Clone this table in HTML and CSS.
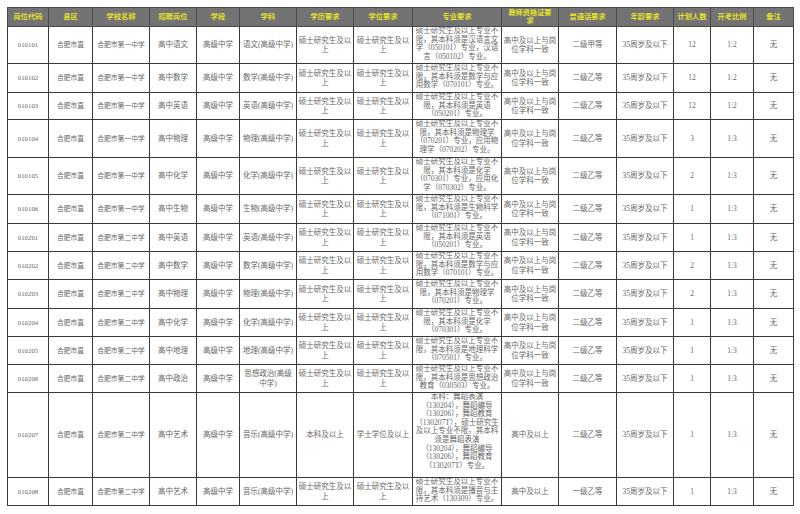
FILE: index.html
```html
<!DOCTYPE html>
<html lang="zh-CN">
<head>
<meta charset="utf-8">
<title>招聘岗位表</title>
<link rel="stylesheet" href="styles.css">
</head>
<body>
<table class="grid">
<colgroup>
<col class="c-code"><col class="c-county"><col class="c-school"><col class="c-post"><col class="c-stage"><col class="c-subject"><col class="c-edu"><col class="c-degree"><col class="c-major"><col class="c-cert"><col class="c-mandarin"><col class="c-age"><col class="c-plan"><col class="c-ratio"><col class="c-note">
</colgroup>
<thead>
<tr class="head">
<th>岗位代码</th><th>县区</th><th>学校名称</th><th>招聘岗位</th><th>学段</th><th>学科</th><th>学历要求</th><th>学位要求</th><th>专业要求</th><th>教师资格证要<br>求</th><th>普通话要求</th><th>年龄要求</th><th>计划人数</th><th>开考比例</th><th>备注</th>
</tr>
</thead>
<tbody>
<tr class="r37">
<td class="sm">010101</td><td class="sm">合肥市直</td><td class="sm">合肥市第一中学</td><td>高中语文</td><td>高级中学</td><td>语文(高级中学)</td><td>硕士研究生及以上</td><td>硕士研究生及以上</td><td class="major">硕士研究生及以上专业不限，其本科须是汉语言文学（050101）专业，汉语言（050102）专业。</td><td>高中及以上与岗位学科一致</td><td>二级甲等</td><td>35周岁及以下</td><td>12</td><td>1:2</td><td>无</td>
</tr>
<tr class="r29">
<td class="sm">010102</td><td class="sm">合肥市直</td><td class="sm">合肥市第一中学</td><td>高中数学</td><td>高级中学</td><td>数学(高级中学)</td><td>硕士研究生及以上</td><td>硕士研究生及以上</td><td class="major">硕士研究生及以上专业不限，其本科须是数学与应用数学（070101）专业。</td><td>高中及以上与岗位学科一致</td><td>二级乙等</td><td>35周岁及以下</td><td>12</td><td>1:2</td><td>无</td>
</tr>
<tr class="r27">
<td class="sm">010103</td><td class="sm">合肥市直</td><td class="sm">合肥市第一中学</td><td>高中英语</td><td>高级中学</td><td>英语(高级中学)</td><td>硕士研究生及以上</td><td>硕士研究生及以上</td><td class="major">硕士研究生及以上专业不限，其本科须是英语（050201）专业。</td><td>高中及以上与岗位学科一致</td><td>二级乙等</td><td>35周岁及以下</td><td>12</td><td>1:2</td><td>无</td>
</tr>
<tr class="r38">
<td class="sm">010104</td><td class="sm">合肥市直</td><td class="sm">合肥市第一中学</td><td>高中物理</td><td>高级中学</td><td>物理(高级中学)</td><td>硕士研究生及以上</td><td>硕士研究生及以上</td><td class="major">硕士研究生及以上专业不限，其本科须是物理学（070201）专业，应用物理学（070202）专业。</td><td>高中及以上与岗位学科一致</td><td>二级乙等</td><td>35周岁及以下</td><td>3</td><td>1:3</td><td>无</td>
</tr>
<tr class="r37">
<td class="sm">010105</td><td class="sm">合肥市直</td><td class="sm">合肥市第一中学</td><td>高中化学</td><td>高级中学</td><td>化学(高级中学)</td><td>硕士研究生及以上</td><td>硕士研究生及以上</td><td class="major">硕士研究生及以上专业不限，其本科须是化学（070301）专业，应用化学（070302）专业。</td><td>高中及以上与岗位学科一致</td><td>二级乙等</td><td>35周岁及以下</td><td>2</td><td>1:3</td><td>无</td>
</tr>
<tr class="r29">
<td class="sm">010106</td><td class="sm">合肥市直</td><td class="sm">合肥市第一中学</td><td>高中生物</td><td>高级中学</td><td>生物(高级中学)</td><td>硕士研究生及以上</td><td>硕士研究生及以上</td><td class="major">硕士研究生及以上专业不限，其本科须是生物科学（071001）专业。</td><td>高中及以上与岗位学科一致</td><td>二级乙等</td><td>35周岁及以下</td><td>1</td><td>1:3</td><td>无</td>
</tr>
<tr class="r28">
<td class="sm">010201</td><td class="sm">合肥市直</td><td class="sm">合肥市第二中学</td><td>高中英语</td><td>高级中学</td><td>英语(高级中学)</td><td>硕士研究生及以上</td><td>硕士研究生及以上</td><td class="major">硕士研究生及以上专业不限，其本科须是英语（050201）专业。</td><td>高中及以上与岗位学科一致</td><td>二级乙等</td><td>35周岁及以下</td><td>1</td><td>1:3</td><td>无</td>
</tr>
<tr class="r28">
<td class="sm">010202</td><td class="sm">合肥市直</td><td class="sm">合肥市第二中学</td><td>高中数学</td><td>高级中学</td><td>数学(高级中学)</td><td>硕士研究生及以上</td><td>硕士研究生及以上</td><td class="major">硕士研究生及以上专业不限，其本科须是数学与应用数学（070101）专业。</td><td>高中及以上与岗位学科一致</td><td>二级乙等</td><td>35周岁及以下</td><td>2</td><td>1:3</td><td>无</td>
</tr>
<tr class="r29">
<td class="sm">010203</td><td class="sm">合肥市直</td><td class="sm">合肥市第二中学</td><td>高中物理</td><td>高级中学</td><td>物理(高级中学)</td><td>硕士研究生及以上</td><td>硕士研究生及以上</td><td class="major">硕士研究生及以上专业不限，其本科须是物理学（070201）专业。</td><td>高中及以上与岗位学科一致</td><td>二级乙等</td><td>35周岁及以下</td><td>2</td><td>1:3</td><td>无</td>
</tr>
<tr class="r28">
<td class="sm">010204</td><td class="sm">合肥市直</td><td class="sm">合肥市第二中学</td><td>高中化学</td><td>高级中学</td><td>化学(高级中学)</td><td>硕士研究生及以上</td><td>硕士研究生及以上</td><td class="major">硕士研究生及以上专业不限，其本科须是化学（070301）专业。</td><td>高中及以上与岗位学科一致</td><td>二级乙等</td><td>35周岁及以下</td><td>1</td><td>1:3</td><td>无</td>
</tr>
<tr class="r28">
<td class="sm">010205</td><td class="sm">合肥市直</td><td class="sm">合肥市第二中学</td><td>高中地理</td><td>高级中学</td><td>地理(高级中学)</td><td>硕士研究生及以上</td><td>硕士研究生及以上</td><td class="major">硕士研究生及以上专业不限，其本科须是地理科学（070501）专业。</td><td>高中及以上与岗位学科一致</td><td>二级乙等</td><td>35周岁及以下</td><td>1</td><td>1:3</td><td>无</td>
</tr>
<tr class="r28">
<td class="sm">010206</td><td class="sm">合肥市直</td><td class="sm">合肥市第二中学</td><td>高中政治</td><td>高级中学</td><td>思想政治(高级中学)</td><td>硕士研究生及以上</td><td>硕士研究生及以上</td><td class="major">硕士研究生及以上专业不限，其本科须是思想政治教育（030503）专业。</td><td>高中及以上与岗位学科一致</td><td>二级乙等</td><td>35周岁及以下</td><td>1</td><td>1:3</td><td>无</td>
</tr>
<tr class="r85">
<td class="sm">010207</td><td class="sm">合肥市直</td><td class="sm">合肥市第二中学</td><td>高中艺术</td><td>高级中学</td><td>音乐(高级中学)</td><td>本科及以上</td><td>学士学位及以上</td><td class="major">本科：舞蹈表演（130204），舞蹈编导（130206），舞蹈教育（130207T），硕士研究生及以上专业不限，其本科须是舞蹈表演（130204），舞蹈编导（130206），舞蹈教育（130207T）专业。</td><td>高中及以上</td><td>二级乙等</td><td>35周岁及以下</td><td>1</td><td>1:3</td><td>无</td>
</tr>
<tr class="r28">
<td class="sm">010208</td><td class="sm">合肥市直</td><td class="sm">合肥市第二中学</td><td>高中艺术</td><td>高级中学</td><td>音乐(高级中学)</td><td>硕士研究生及以上</td><td>硕士研究生及以上</td><td class="major">硕士研究生及以上专业不限，其本科须是播音与主持艺术（130309）专业。</td><td>高中及以上</td><td>一级乙等</td><td>35周岁及以下</td><td>1</td><td>1:3</td><td>无</td>
</tr>
</tbody>
</table>
</body>
</html>
```
FILE: styles.css
```css
html, body {
  margin: 0;
  padding: 0;
  background: #ffffff;
}

body {
  padding: 7px 0 0 7px;
  font-family: "Liberation Serif", "Noto Sans CJK SC", serif;
  color: #666666;
}

.grid {
  border-collapse: collapse;
  table-layout: fixed;
  width: 786px;
  font-size: 7.5px;
  line-height: 9.2px;
}

.c-code { width: 41px; }
.c-county { width: 44px; }
.c-school { width: 57px; }
.c-post { width: 47px; }
.c-stage { width: 43px; }
.c-subject { width: 57px; }
.c-edu { width: 57px; }
.c-degree { width: 59px; }
.c-major { width: 89px; }
.c-cert { width: 57px; }
.c-mandarin { width: 58px; }
.c-age { width: 57px; }
.c-plan { width: 37px; }
.c-ratio { width: 43px; }
.c-note { width: 40px; }

.grid th,
.grid td {
  border: 1px solid #3a3a3a;
  padding: 0 1px;
  text-align: center;
  vertical-align: middle;
  overflow: hidden;
  font-weight: normal;
}

.head {
  height: 19px;
}

.head th {
  background: #737373;
  color: #e6e22a;
  font-weight: bold;
  font-size: 7.2px;
  line-height: 8.4px;
  border-color: #4a4a4a;
}

.grid td.sm {
  font-size: 6.8px;
}

.grid td.major {
  vertical-align: top;
  padding: 0 2px;
  line-height: 8.6px;
}

.r27 { height: 27px; }
.r28 { height: 28px; }
.r29 { height: 29px; }
.r37 { height: 37px; }
.r38 { height: 38px; }
.r85 { height: 85px; }
```
